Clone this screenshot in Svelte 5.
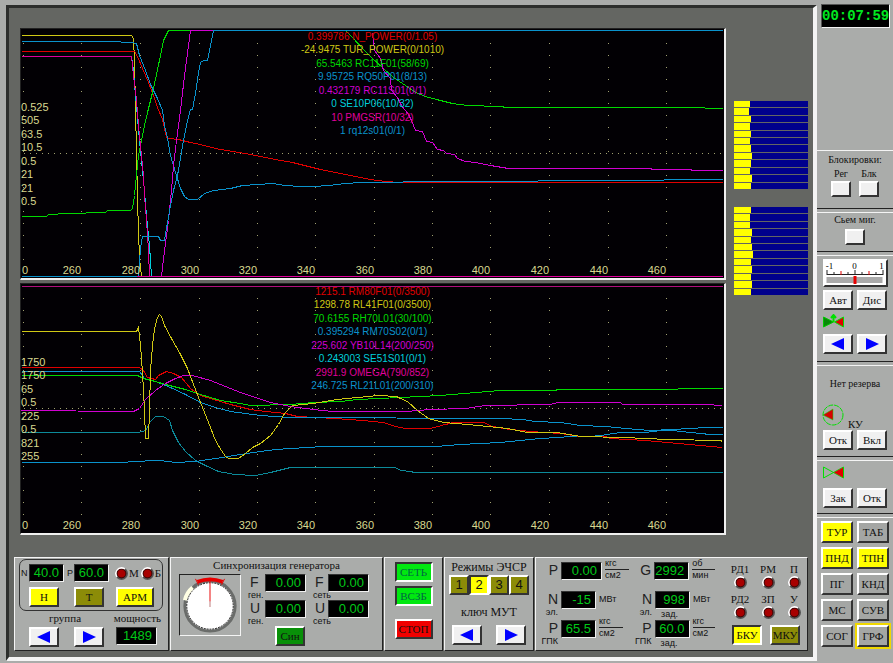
<script lang="ts">
  type Line = { color: string; d: string };
  type Tag = { color: string; text: string };
  type Chart = {
    name: string;
    top: number;
    axisY: number;
    dotsY: number;
    scale: string[];
    tags: Tag[];
    lines: Line[];
  };

  const red = "#e00000";
  const yellow = "#cfc814";
  const green = "#00d800";
  const blue = "#0a92cc";
  const purple = "#d000d0";
  const cyan = "#00d0dc";
  const pink = "#e0009c";

  const ticks = [
    { x: 23, label: "0" },
    { x: 81, label: "260" },
    { x: 140, label: "280" },
    { x: 199, label: "300" },
    { x: 257, label: "320" },
    { x: 315, label: "340" },
    { x: 374, label: "360" },
    { x: 432, label: "380" },
    { x: 490, label: "400" },
    { x: 549, label: "420" },
    { x: 608, label: "440" },
    { x: 666, label: "460" },
  ];

  const charts: Chart[] = [
    {
      name: "Мощность",
      top: 28,
      axisY: 153,
      dotsY: 43,
      scale: ["0.525", "505", "63.5", "10.5", "0.5", "21", "21", "0.5"],
      tags: [
        { color: red, text: "0.399786 N_POWER(0/1.05)" },
        { color: yellow, text: "-24.9475 TUR_POWER(0/1010)" },
        { color: green, text: "65.5463 RC11F01(58/69)" },
        { color: blue, text: "9.95725 RQ50P01(8/13)" },
        { color: purple, text: "0.432179 RC11S01(0/1)" },
        { color: cyan, text: "0 SE10P06(10/32)" },
        { color: pink, text: "10 PMGSR(10/32)" },
        { color: blue, text: "1 rq12s01(0/1)" },
      ],
      lines: [
        { color: yellow, d: "21,35 131,35 133,38 134,60 135,110 136,150 137,200 138,230 139,258 141,276" },
        { color: red, d: "21,51 134,51 137,56 142,68 148,82 153,95 157,107 162,119 166,137 168,138 178,139 190,142 200,144 215,148 232,151 250,154 265,157 280,160 292,162 308,166 320,169 340,173 355,176 370,179 385,181 400,182 722,182" },
        { color: green, d: "21,216 46,216 48,214 67,213 105,212 107,210 130,210 132,208 134,195 136,175 138,155 141,140 144,125 148,108 152,92 156,74 160,55 163,40 168,30 190,30" },
        { color: green, d: "345,30 352,37 362,48 372,58 383,68 393,77 405,85 415,92 425,96 436,99 452,103 467,105 500,106 506,107 704,107 705,108 722,108" },
        { color: blue, d: "21,41 109,41 131,42 136,43 139,55 145,70 150,84 157,98 162,110 164,125 167,138 170,155 175,172 180,188 184,196 188,199 197,199 204,193 213,190 230,188 242,185 257,184 272,183 285,185 300,186 314,186 328,185 345,183 360,182 390,182 416,181 660,180 667,179 722,179" },
        { color: cyan, d: "132,60 135,95 139,140 143,180 146,215 149,245 151,276" },
        { color: pink, d: "21,56 131,56 133,75 136,100 138,125 141,155 143,175 144,195 146,220 148,250 149,276" },
        { color: purple, d: "161,276 164,250 168,220 171,190 173,165 176,140 180,110 184,75 188,45 190,30 213,30" },
        { color: purple, d: "372,33 374,50 380,58 383,70 390,78 391,90 397,97 401,105 408,114 411,120 415,130 422,131 426,141 432,142 437,149 443,150 446,153 454,154 457,158 465,161 475,162 490,165 508,168 650,168 652,169 690,169 692,170 722,170" },
        { color: blue, d: "138,276 139,262 140,248 142,236 158,236 160,240 164,240 166,228 170,205 173,190 177,175 180,158 183,140 187,120 190,109 192,109 195,93 198,72 200,62 203,60 207,60 210,45 213,30 722,30" },
        { color: blue, d: "21,276 136,276" },
        { color: pink, d: "136,276 722,276" },
      ],
    },
    {
      name: "Уровни и расходы",
      top: 283,
      axisY: 408,
      dotsY: 298,
      scale: ["1750", "1750", "65", "0.5", "225", "0.5", "821", "255"],
      tags: [
        { color: red, text: "1215.1 RM80F01(0/3500)" },
        { color: yellow, text: "1298.78 RL41F01(0/3500)" },
        { color: green, text: "70.6155 RH70L01(30/100)" },
        { color: blue, text: "0.395294 RM70S02(0/1)" },
        { color: purple, text: "225.602 YB10L14(200/250)" },
        { color: cyan, text: "0.243003 SE51S01(0/1)" },
        { color: pink, text: "2991.9 OMEGA(790/852)" },
        { color: blue, text: "246.725 RL21L01(200/310)" },
      ],
      lines: [
        { color: "#b0107c", d: "21,286 722,286" },
        { color: "#0c8a9a", d: "21,432 138,432 145,430 150,421 155,416 163,416 169,420 172,430 178,442 185,451 195,460 205,465 218,471 234,474 255,475 270,472 290,467 395,467 400,470 410,471 414,472 722,472" },
        { color: blue, d: "21,462 125,462 130,461 160,460 175,462 195,461 215,458 240,454 260,451 275,449 290,448 323,446 435,446 460,444 500,442 540,438 558,437 570,436 590,436 600,435 620,432 645,432 660,430 672,430 690,432 710,434 722,434" },
        { color: red, d: "21,367 139,367 143,370 147,377 155,379 158,375 166,371 173,373 181,377 190,388 200,395 210,398 230,404 250,409 265,411 285,413 297,416 316,417 335,418 362,420 383,422 395,426 405,428 430,428 441,425 453,422 483,422 492,426 510,429 530,431 560,433 580,436 606,436 609,438 645,440 667,442 700,445 722,447" },
        { color: blue, d: "21,371 139,371 144,378 155,381 170,387 185,394 200,402 215,407 230,411 245,413 260,415 275,416 290,417 500,418 522,419 535,421 560,422 580,425 605,426 625,428 650,430 672,429 690,428 705,427 722,427" },
        { color: green, d: "21,375 137,375 143,378 155,381 165,384 185,389 200,394 220,400 240,403 250,405 290,404 313,402 340,401 357,399 400,397 440,395 475,392 500,390 555,390 557,389 675,389 680,388 722,388" },
        { color: purple, d: "21,410 130,411 133,411 139,408 145,399 155,390 165,383 175,378 183,375 192,375 210,380 225,386 240,392 255,397 270,402 290,406 313,409 332,411 405,411 430,409 465,408 485,405 550,404 557,402 620,402 622,404 705,404 722,405" },
        { color: yellow, d: "21,331 136,331 138,327 140,345 142,372 144,410 145,438 148,438 149,410 150,370 152,345 154,328 157,317 159,314 161,316 164,325 171,338 180,354 187,368 193,384 200,402 208,422 215,440 221,450 225,456 228,458 238,458 245,453 252,447 260,443 270,435 278,424 284,413 292,405 313,403 337,399 357,397 378,395 396,396 400,398 407,401 417,410 428,418 443,422 467,424 507,428 527,432 557,432 580,436 623,437 667,439 720,440 722,441" },
      ],
    },
  ];

  const barGroups = [
    [16, 15, 17, 16, 17, 16, 17, 18, 17, 16, 18, 17],
    [17, 16, 16, 18, 17, 18, 19, 17, 18, 17, 18, 17],
  ];

  const lamps = ["РД1", "РМ", "П", "РД2", "ЗП", "У"];

  const readings = [
    { sign: "P", value: "0.00", unit: ["кгс", "см2"], note: "" },
    { sign: "G", value: "2992", unit: ["об", "мин"], note: "" },
    { sign: "N", value: "-15", unit: ["МВт"], note: "эл." },
    { sign: "N", value: "998", unit: ["МВт"], note: "эл.", second: "зад." },
    { sign: "P", value: "65.5", unit: ["кгс", "см2"], note: "ГПК" },
    { sign: "P", value: "60.0", unit: ["кгс", "см2"], note: "ГПК", second: "зад." },
  ];

  const sync = [
    { sign: "F", note: "ген." },
    { sign: "F", note: "сеть" },
    { sign: "U", note: "ген." },
    { sign: "U", note: "сеть" },
  ];

  const screens = ["ТУР", "ТАБ", "ПНД", "ТПН", "ПГ", "КНД", "МС", "СУВ", "СОГ", "ГРФ"];
  const lit = ["ТУР", "ПНД", "ТПН"];

  let mode = $state(2);
  let current = $state("ГРФ");

  // the first label starts at the chart's left edge instead of ending at its tick
  const labelRight = (x: number) => ((726 - Math.max(x, 28)) / 706) * 100;
</script>

{#snippet lamp()}
  <svg class="lamp" viewBox="0 0 12 12" aria-hidden="true">
    <circle cx="6" cy="6" r="5" fill="none" stroke="#555" stroke-width="2" />
    <path d="M2 9A5 5 0 0 1 9 2" fill="none" stroke="#fff" stroke-width="2" />
    <circle cx="6" cy="6" r="4" fill="#a80000" stroke="#400" />
  </svg>
{/snippet}

{#snippet arrows(left: string, right: string)}
  <button class="btn" aria-label={left}>
    <svg width="14" height="12" viewBox="0 0 14 12"><path d="M0 6 13 0V12Z" fill="#00f" /></svg>
  </button>
  <button class="btn" aria-label={right}>
    <svg width="14" height="12" viewBox="0 0 14 12"><path d="M14 6 1 0V12Z" fill="#00f" /></svg>
  </button>
{/snippet}

<div class="app">
  <main>
    <div class="upper">
      <div class="charts">
        {#each charts as chart}
          <section class="chart" aria-label={chart.name}>
            <svg viewBox="20 {chart.top} 706 252" preserveAspectRatio="none" aria-hidden="true">
              {#each ticks as tick}
                <line class="dots tall" x1={tick.x + 0.5} x2={tick.x + 0.5} y1={chart.dotsY} y2={chart.top + 240} />
              {/each}
              <line class="dots" x1="24" x2="722" y1={chart.axisY + 0.5} y2={chart.axisY + 0.5} />
              <g transform="translate(0.5 0.5)">
                {#each chart.lines as line}
                  <polyline points={line.d} stroke={line.color} />
                {/each}
              </g>
            </svg>
            <ul class="scale">
              {#each chart.scale as value}<li>{value}</li>{/each}
            </ul>
            <ul class="tags">
              {#each chart.tags as tag}<li style:color={tag.color}>{tag.text}</li>{/each}
            </ul>
            <div class="axis">
              {#each ticks as tick}
                <span style:right="{labelRight(tick.x)}%">{tick.label}</span>
              {/each}
            </div>
          </section>
        {/each}
      </div>
      <div class="rods">
        {#each barGroups as group}
          <div class="rod-group">
            {#each group as value}
              <div class="rod"><i style:width="{(value / 74) * 100}%"></i></div>
            {/each}
          </div>
        {/each}
      </div>
    </div>

    <div class="panels">
      <section class="panel group-panel">
        <div class="group-box">
          <div class="group-values">
            <span class="mini">N</span><output class="lcd">40.0</output>
            <span class="mini second">P</span><output class="lcd">60.0</output>
            <span class="mark">{@render lamp()}М</span>
            <span class="mark">{@render lamp()}Б</span>
          </div>
          <div class="triple">
            <button class="btn on">Н</button>
            <button class="btn olive">Т</button>
            <button class="btn on wide">АРМ</button>
          </div>
        </div>
        <div class="captions"><span>группа</span><label for="power">мощность</label></div>
        <div class="triple lower">
          {@render arrows("Предыдущая группа", "Следующая группа")}
          <output class="lcd power" id="power">1489</output>
        </div>
      </section>

      <section class="panel sync-panel">
        <h2>Синхронизация генератора</h2>
        <div class="sync-body">
          <svg class="dial" viewBox="0 0 62 62" aria-label="Синхроноскоп">
            <circle cx="31" cy="32" r="26" fill="#fff" stroke="#6a6c6a" stroke-width="3" />
            <circle cx="31" cy="32" r="24" fill="#fff" stroke="#111" stroke-dasharray="2 1" />
            <path d="M5 26Q7 18 13 13" fill="none" stroke="#ffffe4" stroke-width="4" />
            <path d="M18 7Q31 2 44 7" fill="none" stroke="#e80000" stroke-width="4" />
            <path d="M16 4 19 10M46 4 43 10M31 3V28" stroke="#e80000" />
            <path d="M31 27V33" stroke="#dbb" stroke-width="2" />
          </svg>
          <div class="sync-values">
            {#each sync as item}
              <span class="sign"><b>{item.sign}</b><small>{item.note}</small></span>
              <output class="lcd">0.00</output>
            {/each}
            <button class="btn dark-green">Син</button>
          </div>
        </div>
      </section>

      <section class="panel net-panel">
        <button class="btn green pressed">СЕТЬ</button>
        <button class="btn green pressed">ВСЗБ</button>
        <button class="btn red">СТОП</button>
      </section>

      <section class="panel mode-panel">
        <h2>Режимы ЭЧСР</h2>
        <div class="modes">
          {#each [1, 2, 3, 4] as n}
            <button class="btn {mode === n ? 'on pressed' : 'olive'}" aria-pressed={mode === n} onclick={() => (mode = n)}>{n}</button>
          {/each}
        </div>
        <h2 class="key">ключ МУТ</h2>
        <div class="key-arrows">{@render arrows("МУТ меньше", "МУТ больше")}</div>
      </section>

      <section class="panel values-panel">
        <div class="readings">
          {#each readings as item}
            <div class="reading">
              <span class="sign"><b>{item.sign}</b><small>{item.note}</small></span>
              <span class="value">
                <output class="lcd" class:long={item.value === "0.00"}>{item.value}</output>
                {#if item.second}<small>{item.second}</small>{/if}
              </span>
              {#if item.unit.length > 1}
                <span class="fraction"><span>{item.unit[0]}</span><span>{item.unit[1]}</span></span>
              {:else}
                <span class="unit">{item.unit[0]}</span>
              {/if}
            </div>
          {/each}
        </div>
        <div class="alarms">
          {#each lamps as name}
            <span class="alarm">{name}{@render lamp()}</span>
          {/each}
          <div class="alarm-buttons">
            <button class="btn on pressed">БКУ</button>
            <button class="btn olive">МКУ</button>
          </div>
        </div>
      </section>
    </div>
  </main>

  <aside>
    <section class="clock-box"><time class="clock">00:07:59</time></section>

    <section class="locks">
      <h2>Блокировки:</h2>
      <div class="lock-row">
        <label>Рег<button class="btn" aria-label="Рег"></button></label>
        <label>Блк<button class="btn" aria-label="Блк"></button></label>
      </div>
    </section>

    <section class="flash">
      <label>Сьем миг.<button class="btn" aria-label="Сьем миг."></button></label>
    </section>

    <section class="drive">
      <svg class="meter" viewBox="0 0 60 24" aria-label="Положение">
        <g font-family="'Liberation Serif', serif" font-size="9" text-anchor="middle">
          <text x="4" y="8">-1</text><text x="29" y="8">0</text><text x="56" y="8">1</text>
        </g>
        <path d="M1.5 13.5H57.5M1.5 9V14M8.5 11V14M22.5 11V14M29.5 9V14M36.5 11V14M50.5 11V14M57.5 9V14" stroke="#222" fill="none" />
        <path d="M15.5 10V14M43.5 10V14" stroke="#e00000" />
        <path d="M1 16H57V22H1Z" fill="#aaa" />
        <path d="M28 15H31V23H28Z" fill="#e80000" />
      </svg>
      <div class="pair">
        <button class="btn">Авт</button>
        <button class="btn">Дис</button>
      </div>
      <svg class="valve" width="21" height="14" viewBox="0 0 21 14" aria-hidden="true">
        <path d="M.5 3V13L10.5 8Z" fill="#088a08" stroke="#00c800" />
        <path d="M20.5 3V13L11.5 8Z" fill="#e00000" stroke="#00e000" />
        <path d="M10.5 8V1M8 4 10.500 1 13 4" fill="none" stroke="#00e000" stroke-width="2" />
      </svg>
      <div class="pair">{@render arrows("Закрыть клапан", "Открыть клапан")}</div>
    </section>

    <section class="reserve">
      <h2>Нет резерва</h2>
      <div class="pump">
        <svg width="22" height="22" viewBox="0 0 22 22" aria-hidden="true">
          <circle cx="11" cy="11" r="10" fill="none" stroke="#00e000" stroke-dasharray="5 1" />
          <path d="M1 11 11 5V16Z" fill="#d80000" stroke="#00e000" stroke-width=".5" />
        </svg>
        <span>КУ</span>
      </div>
      <div class="pair">
        <button class="btn">Отк</button>
        <button class="btn">Вкл</button>
      </div>
    </section>

    <section class="gate">
      <svg class="valve" width="21" height="13" viewBox="0 0 21 13" aria-hidden="true">
        <path d="M.5 1V12L20.500 1V12Z" fill="none" stroke="#00e000" />
        <path d="M20 1.500V11.500L11 6.500Z" fill="#e00000" />
      </svg>
      <div class="pair">
        <button class="btn">Зак</button>
        <button class="btn">Отк</button>
      </div>
    </section>

    <nav aria-label="Экраны">
      {#each screens as screen}
        <button
          class="btn grey"
          class:on={lit.includes(screen)}
          class:current={current === screen}
          onclick={() => (current = screen)}>{screen}</button>
      {/each}
    </nav>
  </aside>
</div>

<style>
  :global(body) {
    background: #aaacaa;
  }

  .app,
  .app :global(*) {
    box-sizing: border-box;
  }

  .app {
    display: flex;
    min-width: 893px;
    color: #111;
    font: 11px/14px "Liberation Serif", serif;
  }

  h2,
  ul {
    margin: 0;
    padding: 0;
    list-style: none;
    font-size: 11px;
    font-weight: 400;
    line-height: 14px;
    text-align: center;
  }

  svg { display: block; }

  main {
    flex: 1;
    min-width: 0;
    margin: 5px 0 2px 6px;
    padding: 20px 5px 6px;
    background: #646662;
    border: solid #2c2e2c;
    border-width: 3px 4px 4px 3px;
    border-right-color: #f4f4f4;
    border-bottom-color: #f4f4f4;
  }

  /* trend charts */
  .upper {
    display: flex;
    gap: 8px;
    padding-left: 6px;
  }

  .charts {
    flex: 1;
    display: grid;
    gap: 3px;
  }

  .chart {
    position: relative;
    height: 252px;
    overflow: hidden;
    background: #020004;
    color: #d8d890;
    font: 11px/13px "Liberation Sans", sans-serif;
    border: 1px solid #222;
    border-right: 2px solid #f0f0f0;
    border-bottom: 2px solid #f0f0f0;
  }

  .chart > svg {
    position: absolute;
    inset: -1px -2px -2px -1px;
    width: calc(100% + 3px);
    height: calc(100% + 3px);
  }

  polyline {
    fill: none;
    shape-rendering: crispEdges;
    vector-effect: non-scaling-stroke;
  }

  .dots {
    stroke: #a0a070;
    stroke-dasharray: 1 5;
    shape-rendering: crispEdges;
  }

  .dots.tall { stroke-dasharray: 1 11; }

  .scale,
  .tags {
    position: absolute;
    display: flex;
    flex-direction: column;
    justify-content: space-between;
    height: 107px;
    line-height: inherit;
    white-space: nowrap;
  }

  .scale {
    top: 72px;
    left: 0;
    text-align: left;
  }

  .tags {
    top: 1px;
    left: 0;
    width: 100%;
    font-size: 10px;
  }

  .axis {
    position: absolute;
    inset: auto -2px 1px -1px;
    height: 13px;
  }

  .axis span { position: absolute; }

  .rods {
    width: 74px;
    display: flex;
    flex-direction: column;
    gap: 18px;
    padding-top: 73px;
  }

  .rod-group {
    display: grid;
    grid-auto-rows: 1fr;
    gap: 1px;
    height: 88px;
  }

  .rod { background: #00008c; }

  .rod i {
    display: block;
    height: 100%;
    background: #ff0;
  }

  /* controls */
  .btn {
    display: flex;
    align-items: center;
    justify-content: center;
    width: 30px;
    height: 20px;
    padding: 0;
    border: 2px solid #fff;
    border-right-color: #333;
    border-bottom-color: #333;
    border-radius: 0;
    background: #f0f0f0;
    color: #111;
    font: 11px/14px "Liberation Serif", serif;
  }

  .btn.pressed {
    border-color: #333 #fff #fff #333;
  }

  .btn.on { background: #ff0; }
  .btn.olive { background: #8c8c08; }
  .btn.green { background: #00e810; color: #064; }
  .btn.dark-green { background: #089008; }
  .btn.red { background: #f00000; }
  .btn.grey { background: #a4a6a4; }
  .btn.grey.on { background: #ff0; }

  .lcd {
    display: block;
    width: 35px;
    height: 18px;
    padding-right: 4px;
    border: 1px solid #333;
    border-right-color: #f0f0f0;
    border-bottom-color: #f0f0f0;
    background: #000;
    color: #00c818;
    font: 13px/16px "Liberation Sans", sans-serif;
    text-align: right;
  }

  .lamp {
    width: 13px;
    height: 13px;
  }

  /* bottom panels */
  .panels {
    display: grid;
    grid-template-columns: 155fr 213fr 59fr 90fr 273fr;
    gap: 1px;
    margin-top: 22px;
  }

  .panel {
    min-width: 0;
    height: 94px;
    background: #aaacaa;
    border: 1px solid #f4f4f4;
    border-right-color: #222;
    border-bottom-color: #222;
  }

  .group-panel { padding: 1px 5px 0 4px; }

  .group-box {
    height: 52px;
    padding: 4px 0 0 1px;
    border: 1px solid #333;
    border-radius: 7px;
  }

  .group-values {
    display: flex;
    align-items: center;
  }

  .mini {
    width: 8px;
    font: 9px/10px "Liberation Sans", sans-serif;
  }

  .mini.second {
    width: 7px;
    margin-left: 3px;
  }

  .mark {
    display: flex;
    align-items: center;
    gap: 1px;
    margin-left: 6px;
  }

  .mark + .mark { margin-left: 2px; }

  .triple {
    display: grid;
    grid-template-columns: 45px 42px auto;
    margin-top: 5px;
    padding-left: 8px;
  }

  .triple.lower {
    margin-top: 2px;
    padding-left: 10px;
  }

  .wide { width: 38px; }

  .power { width: 41px; }

  .captions {
    display: flex;
    justify-content: space-between;
    padding: 0 2px 0 30px;
  }

  .sign {
    display: flex;
    flex-direction: column;
    color: #222;
    font: 8px/8px "Liberation Sans", sans-serif;
  }

  .sign b {
    font-size: 14px;
    font-weight: 400;
    line-height: 17px;
  }

  small {
    height: 9px;
    color: #111;
    font: 9px/9px "Liberation Sans", sans-serif;
  }

  .sync-body {
    display: flex;
    gap: 9px;
    padding: 2px 8px 0;
  }

  .dial {
    width: 62px;
    height: 62px;
    flex: none;
    border: 1px solid #222;
    border-right-color: #f4f4f4;
    border-bottom-color: #f4f4f4;
  }

  .sync-values {
    display: grid;
    grid-template-columns: 15px 41px 22px 41px;
    grid-auto-rows: 25px;
    justify-content: start;
    row-gap: 1px;
  }

  .sync-values .lcd,
  .lcd.long { width: 41px; }

  .sync-values .sign:nth-of-type(even) { padding-left: 9px; }

  .sync-values small { margin-left: -2px; }

  .sync-values .btn { grid-column: 2; margin-left: 10px; }

  .net-panel {
    display: flex;
    flex-direction: column;
    align-items: center;
    gap: 4px;
    padding-top: 4px;
  }

  .net-panel .btn { width: 38px; }
  .net-panel .red { margin-top: 9px; }

  .mode-panel { padding-top: 2px; }

  .mode-panel h2 { font-size: 12px; }

  .modes {
    display: flex;
    justify-content: center;
    margin-top: 1px;
  }

  .modes .btn {
    width: 20px;
    font: 13px/14px "Liberation Sans", sans-serif;
  }

  .mode-panel .key { margin-top: 10px; }

  .key-arrows {
    display: flex;
    justify-content: center;
    gap: 14px;
    margin-top: 6px;
  }

  .values-panel {
    display: flex;
    justify-content: space-between;
    padding: 4px 1px 0 5px;
  }

  .readings {
    display: grid;
    grid-template-columns: 94px 80px;
    grid-auto-rows: 29px;
  }

  .reading {
    display: flex;
    gap: 3px;
  }

  .reading .sign {
    width: 17px;
    align-items: flex-end;
  }

  .value small {
    display: block;
    padding-left: 6px;
    margin-top: 1px;
  }

  .fraction,
  .unit {
    font: 9px/9px "Liberation Sans", sans-serif;
  }

  .unit { margin-top: 4px; }

  .fraction {
    width: 24px;
    margin-top: -3px;
  }

  .fraction span {
    display: block;
    height: 11px;
  }

  .fraction span:first-child { border-bottom: 1px solid #222; }

  .fraction span:last-child { padding-top: 1px; }

  .alarms {
    display: grid;
    grid-template-columns: 28px 28px 24px;
    grid-auto-rows: 30px;
  }

  .alarm {
    display: flex;
    flex-direction: column;
    align-items: center;
  }

  .alarm-buttons {
    grid-column: 1 / -1;
    display: flex;
    gap: 8px;
    padding: 3px 0 0 6px;
  }

  /* right column */
  aside {
    width: 76px;
    display: flex;
    flex-direction: column;
  }

  aside h2,
  aside label { font-size: 10px; }

  aside section {
    border-top: 1px solid #f4f4f4;
    border-bottom: 1px solid #222;
    margin-bottom: 3px;
  }

  .clock-box {
    height: 147px;
    padding: 4px 3px 0 4px;
    border: 0;
  }

  .clock {
    display: block;
    height: 24px;
    background: #000;
    border: 1px solid #555;
    border-right-color: #f4f4f4;
    border-bottom-color: #f4f4f4;
    color: #00e820;
    font: bold 14px/22px "Liberation Mono", monospace;
    text-align: center;
  }

  .locks {
    height: 59px;
    padding-top: 2px;
  }

  .lock-row {
    display: flex;
    justify-content: center;
    gap: 8px;
  }

  label .btn {
    width: 20px;
    height: 16px;
  }

  .lock-row label,
  .flash label {
    display: flex;
    flex-direction: column;
    align-items: center;
  }

  .flash { height: 40px; }

  .flash label { gap: 2px; }

  .pair {
    display: grid;
    grid-template-columns: 30px 30px;
    gap: 4px;
    padding-left: 6px;
  }

  .drive {
    height: 107px;
    padding-top: 3px;
  }

  .meter {
    width: 65px;
    height: 28px;
    margin: 0 0 3px 6px;
    border: 2px solid #fff;
    border-right-color: #333;
    border-bottom-color: #333;
    background: #fff;
  }

  .valve { margin: 4px 0 6px 6px; }

  .reserve {
    height: 92px;
    padding-top: 11px;
  }

  .pump {
    display: flex;
    gap: 4px;
    height: 26px;
    margin: 13px 0 0 5px;
  }

  .pump span { margin-top: 13px; }

  .gate {
    height: 54px;
    padding-top: 1px;
  }

  .gate .valve { margin-bottom: 9px; }

  nav {
    display: grid;
    grid-template-columns: 32px 32px;
    gap: 4px;
    padding: 3px 0 0 4px;
    border-top: 1px solid #f4f4f4;
  }

  nav .btn {
    width: 32px;
    height: 22px;
  }

  nav .current { outline: 2px solid #f0d800; }
</style>
